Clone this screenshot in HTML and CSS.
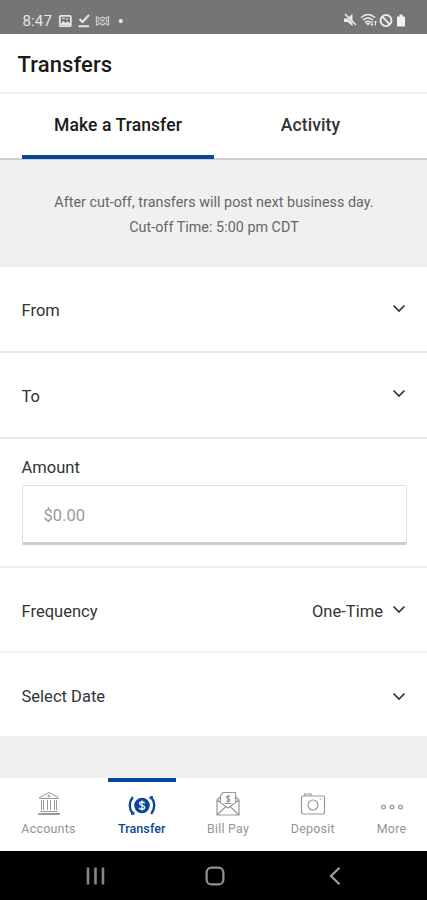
FILE: index.html
```html
<!DOCTYPE html>
<html lang="en">
<head>
<meta charset="utf-8">
<meta name="viewport" content="width=device-width, initial-scale=1">
<title>Transfers</title>
<link rel="stylesheet" href="styles.css">
</head>
<body>
<div class="status">
  <span class="time">8:47</span>
  <svg class="status-left" width="68" height="14" viewBox="0 0 68 14" fill="none" stroke="#e6e6e6">
    <rect x="1.800" y="1.800" width="11" height="10.400" rx="1" stroke-width="1.800"/>
    <path d="M3 9.500l2.500-2.500 2 2 2-1.500 2.500 2V11H3z" fill="#e6e6e6" stroke="none"/>
    <path d="M4 4.500h3M9 4v2" stroke-width="1.200"/>
    <path d="M21.500 5l3 3 6.500-7M20.500 12.300h10.500" stroke-width="2"/>
    <path d="M38.500 3v8l3.500-1.500 2.500 1.500 2.500-1.500 3.500 1.500V3L47 4.500 44.500 3 42 4.500zM40.500 5.500v3M48.500 5.500v3M42.500 5.500l4 3M46.500 5.500l-4 3" stroke-width="1.300" stroke="#ccc"/>
    <circle cx="62.800" cy="7" r="2" fill="#eee" stroke="none"/>
  </svg>
  <svg class="status-right" width="64" height="15" viewBox="0 0 64 15" fill="none" stroke="#ececec">
    <path d="M1 5.500h3L9.500 1v12L4.500 9H1z" fill="#ececec" stroke="none"/>
    <path d="M1 1.500l11.500 11" stroke="#757575" stroke-width="1"/>
    <path d="M2 1l11 11" stroke-width="1.500"/>
    <path d="M18 4.500Q25-1.500 32 4.500M20 7q5-4 10 0M22 9.500q3-2.500 6 0" stroke-width="1.600"/>
    <path d="M25 12.500l-2.500-2.500h5z" fill="#ececec" stroke="none"/>
    <path d="M29 8v4.500M27.700 11l1.300 1.500 1.300-1.500M32.500 12.500V8M31.200 9.500L32.500 8l1.300 1.500" stroke-width="1"/>
    <circle cx="43" cy="7.500" r="5.500" stroke-width="1.900"/>
    <path d="M39.200 3.700l7.600 7.600" stroke-width="1.900"/>
    <path d="M54 3.500h2.500V1.500h3v2H62v10h-8z" fill="#f2f2f2" stroke="none"/>
  </svg>
</div>
<header class="header"><h1>Transfers</h1></header>
<nav class="tabs">
  <div class="tab active">Make a Transfer</div>
  <div class="tab">Activity</div>
</nav>
<p class="notice">After cut-off, transfers will post next business day.<br>Cut-off Time: 5:00 pm CDT</p>
<main>
  <div class="row"><span>From</span><svg class="chev" viewBox="0 0 14 9"><path d="M1.500 1.500L7 7l5.500-5.500"/></svg></div>
  <div class="row to"><span>To</span><svg class="chev" viewBox="0 0 14 9"><path d="M1.500 1.500L7 7l5.500-5.500"/></svg></div>
  <div class="amount">
    <label for="amount">Amount</label>
    <input id="amount" type="text" placeholder="$0.00">
  </div>
  <div class="row frequency"><span>Frequency</span><span class="value">One-Time</span><svg class="chev" viewBox="0 0 14 9"><path d="M1.500 1.500L7 7l5.500-5.500"/></svg></div>
  <div class="row last"><span>Select Date</span><svg class="chev low" viewBox="0 0 14 9"><path d="M1.500 1.500L7 7l5.500-5.500"/></svg></div>
</main>
<nav class="bottom">
  <div class="item accounts">
    <svg width="24" height="26" viewBox="0 0 24 26" fill="none" stroke="#999" stroke-width="1">
      <path d="M2.500 6.500L12 1.500l9.500 5v1h-19z"/><circle cx="12" cy="5" r="1"/>
      <path d="M4.500 9v10M6.500 9v10M10.500 9v10M13.500 9v10M17.500 9v10M19.500 9v10M3.500 20.500h17M1.500 22.500h21v1h-21z"/>
    </svg>
    <span>Accounts</span>
  </div>
  <div class="item transfer">
    <svg width="28" height="26" viewBox="0 0 28 26" fill="none" stroke="#08479b">
      <circle cx="14" cy="14.500" r="7.800" fill="#08479b" stroke="none"/>
      <path d="M16.800 12.300q-.6-1.300-2.800-1.300-2.400 0-2.400 1.600 0 1.400 2.400 1.800 2.700.4 2.700 2.100 0 1.700-2.700 1.700-2.300 0-2.900-1.500M14 9.500v10" stroke="#fff" stroke-width="1.300"/>
      <path d="M4.800 6Q-1.300 14.500 4.800 23M23.200 23q6.100-8.500 0-17" stroke-width="2.300"/>
      <path d="M3 23.200h2.800v-2.500M25 5.800h-2.800v2.500" stroke-width="1.300"/>
    </svg>
    <span>Transfer</span>
  </div>
  <div class="item billpay">
    <svg width="26" height="26" viewBox="0 0 26 26" fill="none" stroke="#999" stroke-width="1.200">
      <path d="M5.500 12V4.500L8 1.500h12.500V12M5.500 6L2 9v15h22V9l-3.500-3M2 9l11 8 11-8M2 24l9-8.500M24 24l-9-8.500"/>
      <path d="M15 5.500q-3-1-3.500.8c0 1.800 3.500 1 3.500 2.900q-.5 1.800-4 .8M13.200 4v8M9.500 12.500h7"/>
    </svg>
    <span>Bill Pay</span>
  </div>
  <div class="item deposit">
    <svg width="26" height="26" viewBox="0 0 26 26" fill="none" stroke="#999" stroke-width="1.200">
      <path d="M3 5h20q1.500 0 1.500 1.500v15Q24.500 23 23 23H3q-1.500 0-1.500-1.500v-15Q1.500 5 3 5zM4.500 5V3h6.500v2M19.500 8h2"/>
      <circle cx="13" cy="14" r="5"/>
    </svg>
    <span>Deposit</span>
  </div>
  <div class="item more">
    <svg width="24" height="26" viewBox="0 0 24 26" fill="none" stroke="#999" stroke-width="1.200">
      <circle cx="3.500" cy="16" r="1.900"/><circle cx="12" cy="16" r="1.900"/><circle cx="20.500" cy="16" r="1.900"/>
    </svg>
    <span>More</span>
  </div>
</nav>
<div class="system">
  <svg width="20" height="20" viewBox="0 0 20 20" fill="none" stroke="#888" stroke-width="2.600"><path d="M3 1.500v17M10.500 1.500v17M18 1.500v17"/></svg>
  <svg width="20" height="20" viewBox="0 0 20 20" fill="none" stroke="#929292" stroke-width="2.200"><rect x="1.600" y="1.600" width="16.800" height="16.800" rx="5"/></svg>
  <svg width="20" height="20" viewBox="0 0 20 20" fill="none" stroke="#a0a0a0" stroke-width="2.200"><path d="M14.500 1.800L6 10l8.500 8.200"/></svg>
</div>
</body>
</html>
```
FILE: styles.css
```css
* { box-sizing: border-box; }
body {
  margin: 0;
  height: 900px;
  display: flex;
  flex-direction: column;
  overflow: hidden;
  background: #f0f0f0;
  color: #333;
  font-family: Roboto, "Liberation Sans", sans-serif;
}
.status {
  height: 34px;
  flex: none;
  display: flex;
  align-items: center;
  padding: 7px 20px 0 22.500px;
  background: #757575;
  color: #e6e6e6;
}
.time { width: 35px; font-size: 15px; letter-spacing: .15px; }
.status-right { margin-left: auto; }
.header {
  height: 60px;
  flex: none;
  padding: 0 17.500px;
  background: #fff;
  border-bottom: 2px solid #ededed;
}
h1 {
  margin: 0;
  font-size: 22px;
  line-height: 61px;
  font-weight: 500;
  letter-spacing: .1px;
  color: #1a1a1a;
}
.tabs {
  height: 66px;
  flex: none;
  display: grid;
  grid-template-columns: 192px 193px;
  padding-left: 22px;
  background: #fff;
  border-bottom: 2px solid #cfcfcf;
}
.tab {
  height: 65px;
  text-align: center;
  font-size: 17.500px;
  line-height: 63px;
  font-weight: 500;
  letter-spacing: .1px;
}
.tab.active { color: #1a1a1a; border-bottom: 4px solid #08479b; }
.notice {
  margin: 0;
  height: 107px;
  flex: none;
  padding: 30px 0 0 1px;
  text-align: center;
  font-size: 14.300px;
  line-height: 24.500px;
  letter-spacing: .04px;
  color: #666;
}
main { flex: none; font-size: 16.500px; letter-spacing: .02px; }
.row {
  height: 86px;
  display: flex;
  align-items: center;
  padding: 4px 21px 0 21.500px;
  background: #fff;
  border-bottom: 2px solid #e9e9e9;
}
.row:first-child { padding-top: 3px; }
.row.to { padding-top: 2px; }
.row.frequency { height: 85px; border-color: #f0f0f0; }
.row.last { height: 83px; padding-top: 3px; border-bottom: 0; }
.value { margin-left: auto; margin-right: 9px; }
.chev {
  width: 14px;
  height: 9px;
  margin: 0 0 5px auto;
  fill: none;
  stroke: #333;
  stroke-width: 1.700;
}
.value + .chev { margin-left: 0; }
.chev.low { margin-bottom: 0; }
.amount {
  height: 129px;
  padding: 15px 20px 0 21.500px;
  background: #fff;
  border-bottom: 2px solid #eee;
}
.amount label { display: block; height: 31px; line-height: 27px; }
.amount input {
  display: block;
  width: 100%;
  height: 60px;
  padding: 3px 20px 0 21px;
  border: 1.500px solid #dedede;
  border-bottom: 3px solid #ccc;
  border-radius: 2px;
  background: #fff;
  font: inherit;
  letter-spacing: inherit;
}
.amount input::placeholder { color: #999; opacity: 1; }
.bottom {
  height: 73px;
  flex: none;
  margin-top: auto;
  display: flex;
  justify-content: space-between;
  padding: 0 10px 0 11px;
  background: #fff;
}
.item {
  display: flex;
  flex-direction: column;
  align-items: center;
  padding-top: 13px;
  font-size: 12.500px;
  line-height: 20px;
  font-weight: 400;
  letter-spacing: .2px;
  color: #949494;
  white-space: nowrap;
}
.item svg { flex: none; margin-bottom: 2px; }
.accounts { width: 75px; }
.transfer { width: 68px; margin-left: 1px; padding-top: 9px; border-top: 4px solid #08479b; color: #08479b; font-weight: 500; letter-spacing: .1px; }
.billpay { width: 63px; }
.deposit { width: 65px; }
.more { width: 51px; }
.system {
  height: 49px;
  flex: none;
  display: flex;
  justify-content: center;
  gap: 100px;
  padding: 15px 0 0 3px;
  background: #000;
}
```
